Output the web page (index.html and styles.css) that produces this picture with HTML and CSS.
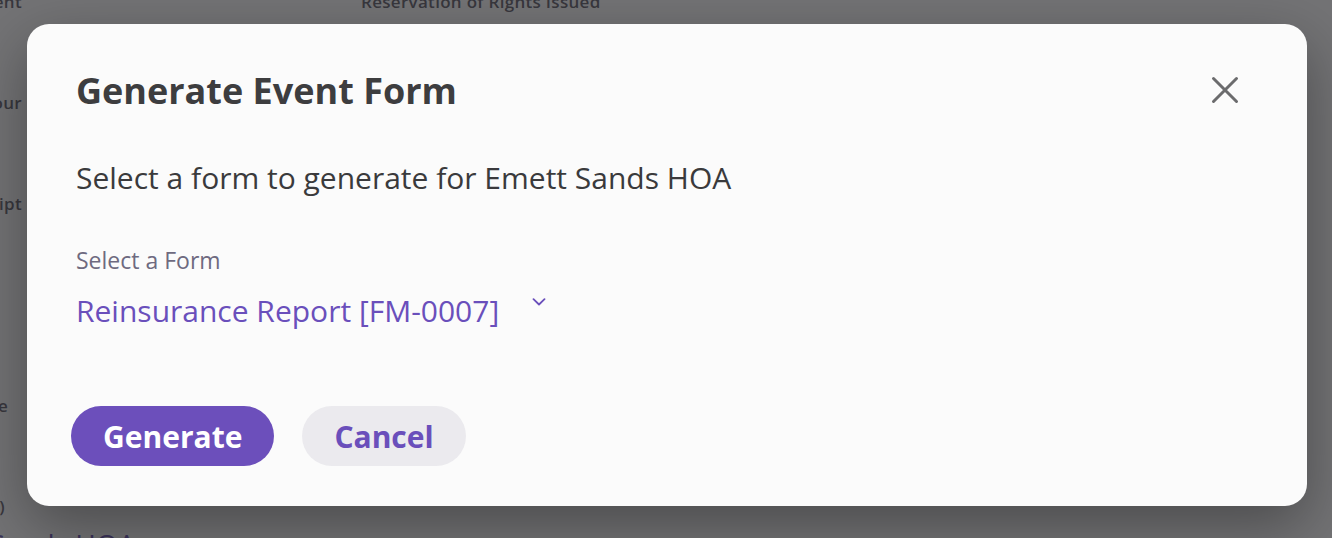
FILE: index.html
```html
<!DOCTYPE html>
<html>
<head>
<meta charset="utf-8">
<link rel="stylesheet" href="styles.css">
</head>
<body>
<div class="page">
  <div class="grid">
    <div class="lcell"><span class="flabel">Agent</span></div>
    <div class="rcell"><span class="flabel">Reservation of Rights Issued</span></div>
    <div class="lcell"><span class="flabel">Hour</span></div>
    <div class="rcell"></div>
    <div class="lcell"><span class="flabel">Transcript</span></div>
    <div class="rcell"></div>
    <div class="lcell"></div>
    <div class="rcell"></div>
    <div class="lcell"><span class="flabel short">Loss Date</span></div>
    <div class="rcell"></div>
    <div class="lcell"><span class="flabel shorter">(0)</span></div>
    <div class="rcell"></div>
  </div>
  <div class="entity">Emett Sands HOA</div>
</div>

<div class="overlay">
  <div class="modal">
    <div class="modal-head">
      <h1 class="title">Generate Event Form</h1>
      <button class="close" aria-label="Close">
        <svg width="28" height="28" viewBox="0 0 28 28"><path d="M2.5 2.5 L25.5 25.5 M25.5 2.5 L2.5 25.5" stroke="#6b6b6d" stroke-width="3" stroke-linecap="round" fill="none"/></svg>
      </button>
    </div>
    <p class="subtitle">Select a form to generate for Emett Sands HOA</p>
    <div class="select-block">
      <div class="select-label">Select a Form</div>
      <div class="select-value">
        <span>Reinsurance Report [FM-0007]</span>
        <svg class="chev" width="14" height="8" viewBox="0 0 14 8"><path d="M1.5 1.2 L7 6.5 L12.5 1.2" stroke="#6a4fbb" stroke-width="1.8" fill="none" stroke-linecap="round" stroke-linejoin="round"/></svg>
      </div>
    </div>
    <div class="actions">
      <button class="btn primary">Generate</button>
      <button class="btn secondary">Cancel</button>
    </div>
  </div>
</div>
</body>
</html>
```

FILE: styles.css
```css
* { box-sizing: border-box; }
html, body { margin: 0; padding: 0; }
body {
  width: 1332px;
  height: 538px;
  overflow: hidden;
  font-family: "Open Sans", "Liberation Sans", sans-serif;
  background: #f4f4f6;
  position: relative;
}
.page {
  height: 538px;
  overflow: hidden;
}
.grid {
  display: grid;
  grid-template-columns: 22px 400px;
  column-gap: 339px;
  grid-template-rows: repeat(5, 101px) 24px;
  margin-top: -10px;
}
.lcell {
  display: flex;
  justify-content: flex-end;
  white-space: nowrap;
}
.rcell { white-space: nowrap; }
.flabel {
  font-size: 17px;
  line-height: 24px;
  font-weight: 600;
  color: #2f2c3b;
  letter-spacing: 0.3px;
}
.short { margin-right: 14px; }
.shorter { margin-right: 17px; }
.entity {
  margin-left: -95px;
  margin-top: 5px;
  font-size: 28px;
  line-height: 40px;
  color: #3b1f9a;
  white-space: nowrap;
}
.overlay {
  position: absolute;
  inset: 0;
  background: rgba(60, 60, 62, 0.7);
  padding: 24px 25px 32px 27px;
}
.modal {
  width: 1280px;
  height: 482px;
  background: #fbfbfb;
  border-radius: 22px;
  box-shadow: 0 20px 60px rgba(0, 0, 0, 0.35);
  padding: 42px 60px 40px 49px;
  display: flex;
  flex-direction: column;
}
.modal-head {
  display: flex;
  justify-content: space-between;
  align-items: flex-start;
}
.title {
  margin: 0;
  font-size: 36px;
  font-weight: 700;
  color: #3d3d3f;
  line-height: 50px;
}
.close {
  border: 0;
  background: none;
  padding: 0;
  margin-top: 10px;
  margin-right: 8px;
  width: 28px;
  height: 28px;
  cursor: pointer;
}
.close svg { display: block; }
.subtitle {
  margin: 42px 0 0 0;
  font-size: 30px;
  line-height: 40px;
  color: #3a3a3c;
}
.select-block { margin-top: 47px; }
.select-label {
  font-size: 23px;
  line-height: 30px;
  color: #6e6a80;
}
.select-value {
  display: flex;
  align-items: flex-start;
  gap: 33px;
  font-size: 30px;
  line-height: 40px;
  color: #6a4fbb;
  margin-top: 16px;
}
.chev { margin-top: 7px; }
.actions {
  margin-top: auto;
  margin-left: -5px;
  display: flex;
  gap: 28px;
}
.btn {
  font-family: "Open Sans", "Liberation Sans", sans-serif;
  font-size: 30px;
  font-weight: 700;
  height: 60px;
  border: 0;
  border-radius: 30px;
  padding: 0 32px;
  cursor: pointer;
}
.primary { background: #6c4fbb; color: #ffffff; }
.secondary { background: #ebeaee; color: #6a4fbb; }
```
